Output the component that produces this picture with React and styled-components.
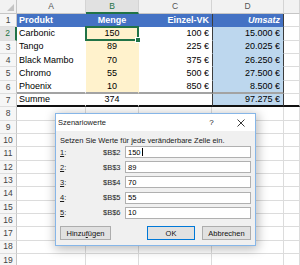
import React from 'react';
import styled, { createGlobalStyle } from 'styled-components';

const GlobalStyle = createGlobalStyle`
  html, body {
    margin: 0;
    padding: 0;
    background: #fff;
  }
  body {
    width: 300px;
    height: 265px;
    overflow: hidden;
    font-family: 'Liberation Sans', Arial, sans-serif;
  }
  * { box-sizing: border-box; }
`;

const GRID = '1px solid #dcdcdc';
const NONE = '1px solid transparent';
const DARK = '1px solid #3c3c3c';

const Screen = styled.div`
  position: relative;
  width: 300px;
  height: 265px;
  overflow: hidden;
`;

const Sheet = styled.div`
  display: grid;
  grid-template-columns: 17px 69px 53px 73px 72px 16px;
  grid-template-rows: 14px repeat(19, 13.333px);
  font-size: 9px;
  line-height: 1;
  color: #000;
`;

const Corner = styled.div`
  position: relative;
  background: #f2f2f2;
  border-right: 1px solid #c6c6c6;
  border-bottom: 1px solid #c6c6c6;

  &::after {
    content: '';
    position: absolute;
    right: 2px;
    bottom: 2px;
    border-style: solid;
    border-width: 0 0 7px 7px;
    border-color: transparent transparent #c4c4c4 transparent;
  }
`;

const ColHead = styled.div`
  display: flex;
  align-items: center;
  justify-content: center;
  background: ${p => (p.$active ? '#e1e1e1' : '#f2f2f2')};
  color: ${p => (p.$active ? '#217346' : '#555')};
  font-size: 8.5px;
  border-right: 1px solid #d4d4d4;
  border-bottom: ${p => (p.$active ? '2px solid #217346' : '1px solid #c6c6c6')};
`;

const RowHead = styled.div`
  display: flex;
  align-items: center;
  justify-content: center;
  background: ${p => (p.$active ? '#e1e1e1' : '#f6f6f6')};
  color: ${p => (p.$active ? '#217346' : '#444')};
  font-size: 8.5px;
  border-right: ${p => (p.$active ? '2px solid #217346' : '1px solid #c6c6c6')};
  border-bottom: 1px solid #dedede;
`;

const Cell = styled.div`
  position: relative;
  display: flex;
  align-items: center;
  justify-content: ${p =>
    p.$align === 'right' ? 'flex-end' : p.$align === 'center' ? 'center' : 'flex-start'};
  padding: 0 ${p => (p.$align === 'right' ? '3px' : '2px')};
  white-space: nowrap;
  background: ${p => p.$bg || '#fff'};
  color: ${p => p.$color || '#000'};
  font-weight: ${p => (p.$bold ? 700 : 400)};
  font-style: ${p => (p.$italic ? 'italic' : 'normal')};
  border-left: ${p => p.$bl || '0'};
  border-right: ${p => p.$br || GRID};
  border-bottom: ${p => p.$bb || GRID};

  ${p =>
    p.$selected &&
    `
    &::after {
      content: '';
      position: absolute;
      inset: -1px -1px -1px -1px;
      border: 2px solid #217346;
    }
    &::before {
      content: '';
      position: absolute;
      right: -3px;
      bottom: -3px;
      width: 4px;
      height: 4px;
      background: #217346;
      border: 1px solid #fff;
      z-index: 2;
    }
  `}
`;

const Dialog = styled.div`
  position: absolute;
  left: 55px;
  top: 113px;
  width: 201px;
  height: 133px;
  display: flex;
  flex-direction: column;
  background: #f0f0f0;
  border: 1px solid #86b6e8;
  box-shadow: 1px 2px 10px 1px rgba(0, 0, 0, 0.28);
  font-size: 7.5px;
  color: #1a1a1a;
`;

const TitleBar = styled.div`
  display: flex;
  align-items: center;
  height: 17px;
  background: #fff;
  padding-left: 2px;
`;

const Title = styled.span`
  flex: 1;
  font-size: 7.5px;
`;

const TitleButton = styled.span`
  display: flex;
  align-items: center;
  justify-content: center;
  width: 29px;
  height: 100%;
  font-size: 8px;
  color: #222;
`;

const Body = styled.div`
  flex: 1;
  display: flex;
  flex-direction: column;
  padding: 4px 4px 5px 4px;
`;

const Hint = styled.div`
  height: 10px;
  display: flex;
  align-items: center;
  margin-bottom: 1px;
`;

const Fields = styled.div`
  display: grid;
  grid-template-columns: 43px 22px 1fr;
  grid-auto-rows: 12px;
  row-gap: 3.2px;
  align-items: center;
`;

const Key = styled.span`
  text-decoration: underline;
`;

const Ref = styled.span`
  font-size: 7.5px;
`;

const Field = styled.div`
  height: 12px;
  display: flex;
  align-items: center;
  padding-left: 2px;
  background: #fff;
  border: 1px solid #b0b0b0;
  color: #000;
`;

const Caret = styled.span`
  display: inline-block;
  width: 1px;
  height: 8px;
  margin-left: 1px;
  background: #000;
`;

const Buttons = styled.div`
  margin-top: auto;
  display: flex;
  gap: 7px;
`;

const Button = styled.div`
  width: ${p => p.$w}px;
  height: 14px;
  display: flex;
  align-items: center;
  justify-content: center;
  background: #e1e1e1;
  border: ${p => (p.$primary ? '1.5px solid #0078d7' : '1px solid #adadad')};
  margin-left: ${p => (p.$push ? 'auto' : '0')};
  color: #111;
`;

const products = [
  ['Carbonic', '150', '100 €', '15.000 €'],
  ['Tango', '89', '225 €', '20.025 €'],
  ['Black Mambo', '70', '375 €', '26.250 €'],
  ['Chromo', '55', '500 €', '27.500 €'],
  ['Phoenix', '10', '850 €', '8.500 €'],
];

const fields = [
  ['1', '$B$2', '150'],
  ['2', '$B$3', '89'],
  ['3', '$B$4', '70'],
  ['4', '$B$5', '55'],
  ['5', '$B$6', '10'],
];

const BLUE = '#4472c4';
const YELLOW = '#fff2cc';
const LIGHTBLUE = '#bdd7ee';

function Close() {
  return (
    <svg width="8" height="8" viewBox="0 0 8 8">
      <path d="M0.5 0.5 L7.5 7.5 M7.5 0.5 L0.5 7.5" stroke="#222" strokeWidth="0.9" />
    </svg>
  );
}

export default function App() {
  const emptyRows = [];
  for (let r = 8; r <= 19; r++) emptyRows.push(r);

  return (
    <Screen>
      <GlobalStyle />
      <Sheet>
        <Corner />
        <ColHead>A</ColHead>
        <ColHead $active>B</ColHead>
        <ColHead>C</ColHead>
        <ColHead>D</ColHead>
        <ColHead />

        <RowHead>1</RowHead>
        <Cell $bg={BLUE} $color="#fff" $bold $br={NONE} $bb={NONE}>Produkt</Cell>
        <Cell $bg={BLUE} $color="#fff" $bold $align="center" $br={NONE} $bb={NONE}>Menge</Cell>
        <Cell $bg={BLUE} $color="#fff" $bold $align="right" $br="0" $bb={NONE}>Einzel-VK</Cell>
        <Cell $bg={BLUE} $color="#fff" $bold $italic $align="right" $bl={DARK} $br={DARK} $bb={NONE}>Umsatz</Cell>
        <Cell />

        {products.map(([name, qty, price, total], i) => {
          const last = i === products.length - 1;
          const bb = last ? '2px solid #a3a3a3' : NONE;
          return (
            <React.Fragment key={name}>
              <RowHead $active={i === 0}>{i + 2}</RowHead>
              <Cell $br={NONE} $bb={bb}>{name}</Cell>
              <Cell $bg={YELLOW} $align="center" $br={NONE} $bb={bb} $selected={i === 0}>{qty}</Cell>
              <Cell $align="right" $br="0" $bb={bb}>{price}</Cell>
              <Cell $bg={LIGHTBLUE} $align="right" $bl={DARK} $br={DARK} $bb={bb}>{total}</Cell>
              <Cell />
            </React.Fragment>
          );
        })}

        <RowHead>7</RowHead>
        <Cell $br={NONE} $bb="2px solid #111">Summe</Cell>
        <Cell $align="center" $br={NONE} $bb="2px solid #111">374</Cell>
        <Cell $align="right" $br="0" $bb="2px solid #111" />
        <Cell $bg={LIGHTBLUE} $align="right" $bl={DARK} $br={DARK} $bb="2px solid #111">97.275 €</Cell>
        <Cell $bb="2px solid #111" />

        {emptyRows.map(r => (
          <React.Fragment key={r}>
            <RowHead>{r}</RowHead>
            <Cell />
            <Cell />
            <Cell />
            <Cell />
            <Cell />
          </React.Fragment>
        ))}
      </Sheet>

      <Dialog>
        <TitleBar>
          <Title>Szenariowerte</Title>
          <TitleButton>?</TitleButton>
          <TitleButton><Close /></TitleButton>
        </TitleBar>
        <Body>
          <Hint>Setzen Sie Werte für jede veränderbare Zelle ein.</Hint>
          <Fields>
            {fields.map(([n, ref, val], i) => (
              <React.Fragment key={ref}>
                <span><Key>{n}</Key>:</span>
                <Ref>{ref}</Ref>
                <Field>
                  {val}
                  {i === 0 && <Caret />}
                </Field>
              </React.Fragment>
            ))}
          </Fields>
          <Buttons>
            <Button $w={51}>Hinzu<Key>f</Key>ügen</Button>
            <Button $w={48} $primary $push>OK</Button>
            <Button $w={49}>Abbrechen</Button>
          </Buttons>
        </Body>
      </Dialog>
    </Screen>
  );
}
